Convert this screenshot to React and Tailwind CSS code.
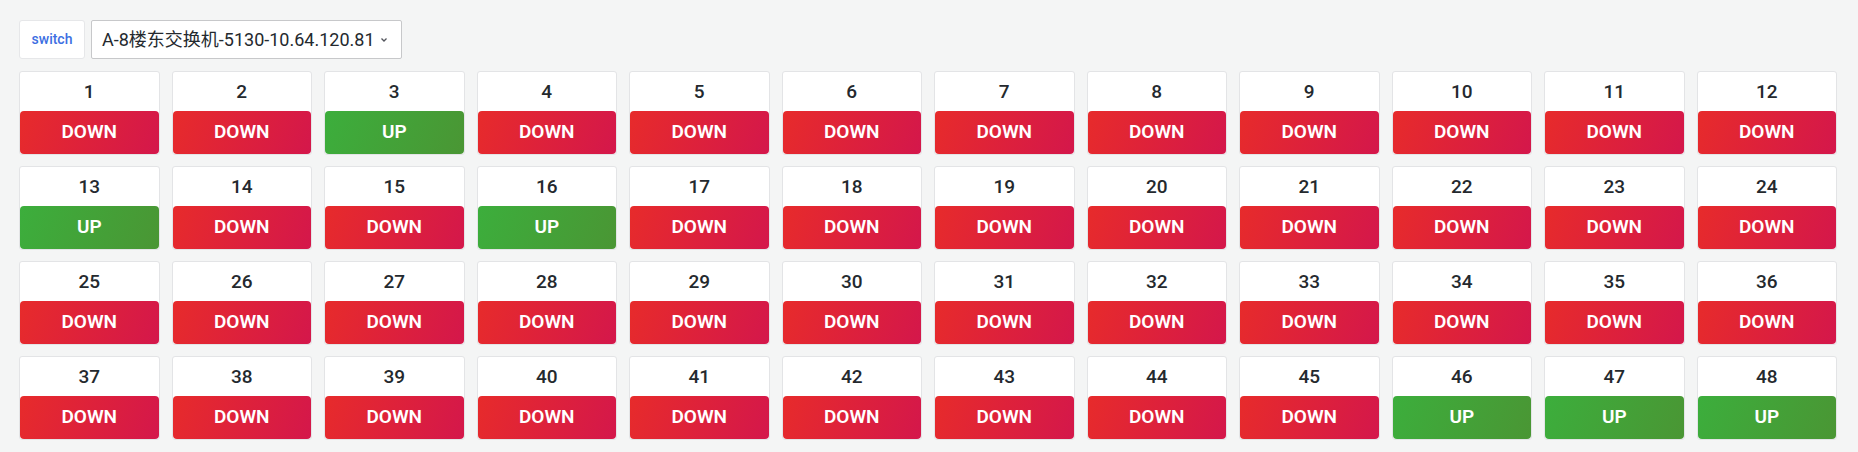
const UP_PORTS = [3, 13, 16, 46, 47, 48];

function PortCard({ port }) {
    const up = UP_PORTS.includes(port);
    return (
        <div className="h-[84px] flex flex-col rounded-[3px] border border-[#e3e4e6] bg-white">
            <div className="flex-1 flex items-center justify-center text-[19px] font-medium text-[#24292e] leading-none">
                {port}
            </div>
            <div
                className={
                    up
                        ? "h-[43px] flex items-center justify-center rounded-[4px] bg-linear-[110deg] from-[#3cae3c] to-[#4a9634] text-white text-[19px] font-semibold"
                        : "h-[43px] flex items-center justify-center rounded-[4px] bg-linear-[110deg] from-[#e72b2b] to-[#d4174b] text-white text-[19px] font-semibold"
                }
            >
                {up ? "UP" : "DOWN"}
            </div>
        </div>
    );
}

export default function App() {
    const ports = Array.from({ length: 48 }, (_, i) => i + 1);

    return (
        <div
            className="min-h-screen bg-[#f4f5f5] pl-[19px] pr-[21px] pt-[20px] pb-[12px]"
            style={{ fontFamily: 'Roboto, "Noto Sans CJK SC", sans-serif' }}
        >
            <div className="flex gap-[6px] h-[39px]">
                <div className="w-[66px] flex items-center justify-center rounded-[3px] border border-[#e6e7e9] bg-white text-[14px] font-medium text-[#3d6fe2]">
                    switch
                </div>
                <div className="w-[311px] flex items-center pl-[10px] pr-[12px] rounded-[2px] border border-[#c7c8ca] bg-white text-[18px] text-[#24292e]">
                    <span className="flex-1">A-8楼东交换机-5130-10.64.120.81</span>
                    <svg width="10" height="10" viewBox="0 0 10 10" className="text-[#52545c]">
                        <path d="M2.5 3.5 L5 6 L7.5 3.5" fill="none" stroke="currentColor" strokeWidth="1.3" />
                    </svg>
                </div>
            </div>
            <div className="mt-[12px] grid grid-cols-12 gap-x-[12px] gap-y-[11px]">
                {ports.map((p) => (
                    <PortCard key={p} port={p} />
                ))}
            </div>
        </div>
    );
}
